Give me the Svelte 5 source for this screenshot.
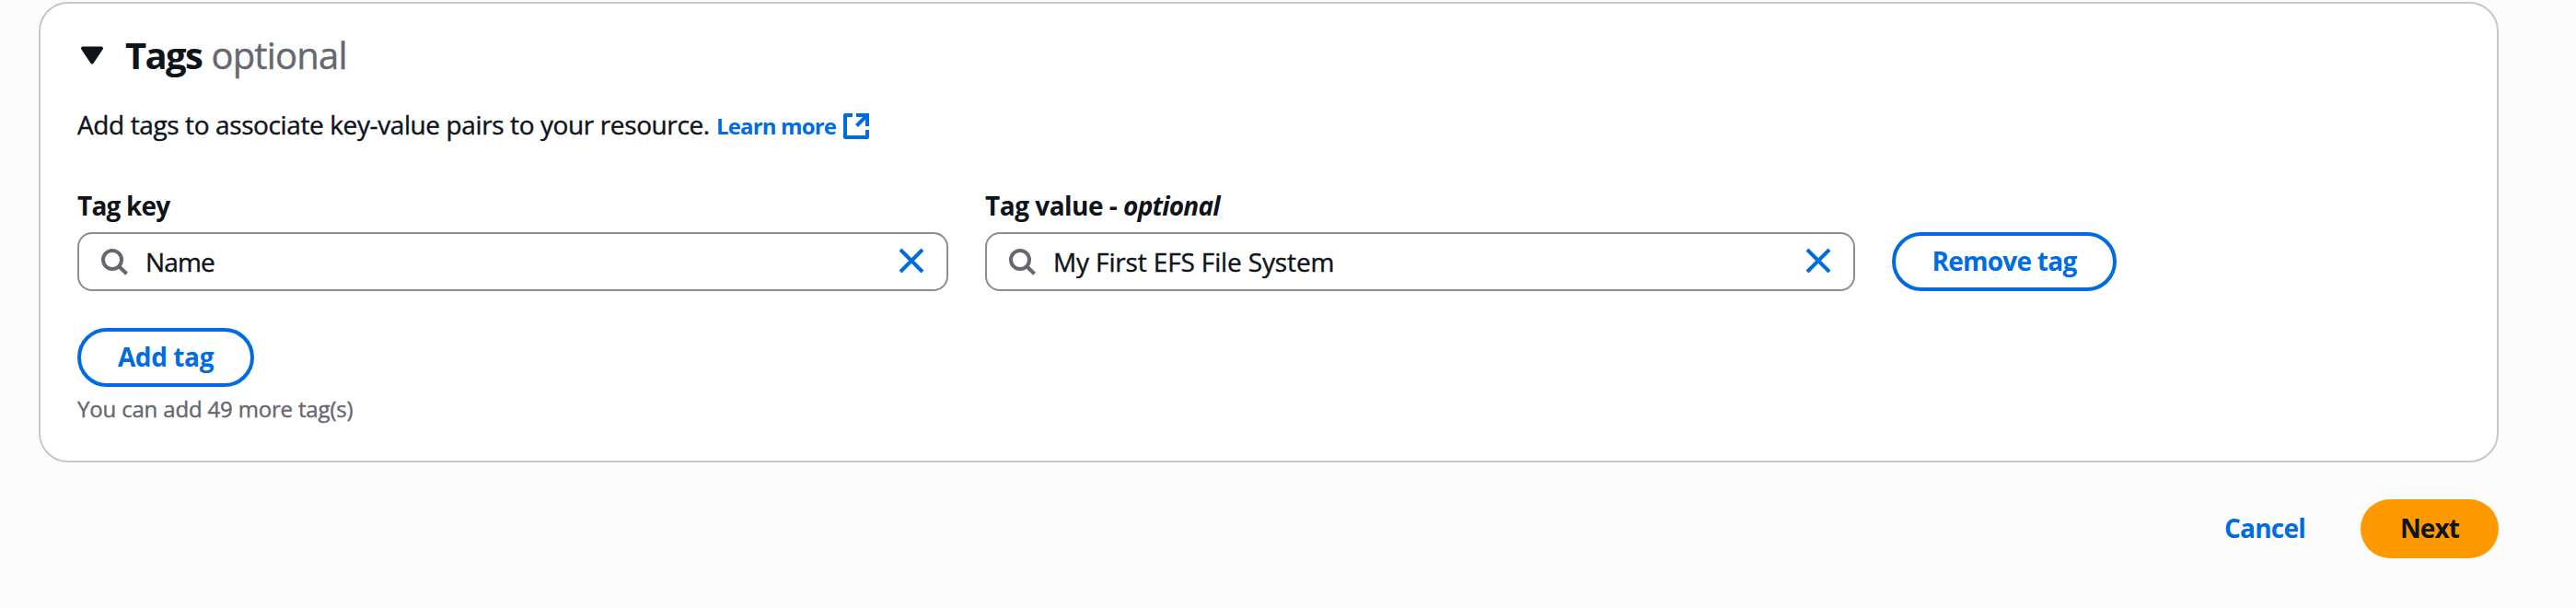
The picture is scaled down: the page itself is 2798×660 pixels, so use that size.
<script>
  const fields = [
    { id: 'key', label: 'Tag key', hint: '', value: 'Name' },
    { id: 'value', label: 'Tag value - ', hint: 'optional', value: 'My First EFS File System' }
  ];
</script>

<main>
  <section class="card">
    <header>
      <svg class="caret" viewBox="0 0 32 32" aria-hidden="true">
        <path d="M6 8.500h20L16 23.500z" fill="currentColor" stroke="currentColor" stroke-width="4" stroke-linejoin="round" />
      </svg>
      <h2>Tags</h2>
      <span class="muted">optional</span>
    </header>

    <p class="description">
      <span class="sentence">Add tags to associate key-value pairs to your resource.</span>
      <a href="#learn">Learn more</a>
      <svg class="external" viewBox="0 0 28 28" aria-hidden="true">
        <path d="M10 2H2v24h24v-8" stroke-linejoin="round" />
        <path d="M14 2h12v12M25 3 14.500 13.500" />
      </svg>
    </p>

    <div class="row">
      {#each fields as field}
        <div class="field {field.id}">
          <div class="label"><span>{field.label}</span>{#if field.hint}<i>{field.hint}</i>{/if}</div>
          <div class="input">
            <svg class="search" viewBox="0 0 32 32" aria-hidden="true">
              <circle cx="14" cy="14" r="10" />
              <path d="m21 21 8.600 8.200" />
            </svg>
            <span class="text">{field.value}</span>
            <svg class="clear" viewBox="0 0 28 28" aria-hidden="true">
              <path d="m2 2 24 24M26 2 2 26" />
            </svg>
          </div>
        </div>
      {/each}
      <button class="outline remove">Remove tag</button>
    </div>

    <button class="outline add">Add tag</button>
    <p class="help">You can add 49 more tag(s)</p>
  </section>

  <footer>
    <button class="cancel">Cancel</button>
    <button class="next">Next</button>
  </footer>
</main>

<style>
  :global(body) { background: #fcfcfd; }
  main {
    box-sizing: border-box;
    width: 2798px;
    height: 660px;
    padding: 2px 84px 0 42px;
    overflow: hidden;
    background: #fcfcfd;
    color: #0f141a;
    font: 400 28px/40px 'Open Sans', 'Noto Sans', sans-serif;
  }
  .card {
    box-sizing: border-box;
    height: 500px;
    padding: 32px 40px 0;
    border: 2px solid #c6c6cd;
    border-radius: 32px;
    background: #fff;
  }
  svg { flex: none; fill: none; }
  header { display: flex; align-items: center; height: 48px; font-size: 40px; line-height: 48px; }
  .caret { width: 32px; height: 32px; }
  h2 { margin: 0 10px 0 20px; font-size: 40px; font-weight: 700; letter-spacing: -1.6px; }
  .muted { color: #656871; letter-spacing: -.8px; }
  .muted, .sentence, .text, .help { -webkit-text-stroke: .4px currentColor; }
  .description { display: flex; align-items: center; height: 40px; margin: 31px 0 0; }
  .sentence { width: 689px; white-space: nowrap; letter-spacing: -.39px; }
  a { width: 129px; margin: 3px 9px 0 5px; color: #006ce0; font-size: 24px; font-weight: 700; letter-spacing: -.85px; text-decoration: none; white-space: nowrap; }
  .external { width: 28px; height: 28px; margin-top: 4px; stroke: #006ce0; stroke-width: 4; }
  .row { display: flex; align-items: flex-end; gap: 40px; margin-top: 48px; }
  .field { width: 946px; }
  .field.value { width: 945px; }
  .label { height: 40px; margin-bottom: 9px; font-weight: 700; white-space: pre; letter-spacing: -.8px; }
  .value .label { letter-spacing: -.5px; }
  .label i { letter-spacing: -.8px; }
  .input {
    display: flex;
    align-items: center;
    box-sizing: border-box;
    height: 64px;
    padding: 0 24px 0 22px;
    border: 2px solid #8c8c94;
    border-radius: 16px;
  }
  .search { width: 32px; height: 32px; stroke: #656871; stroke-width: 4; }
  .text { flex: 1; margin-left: 18px; letter-spacing: -.14px; }
  .key .text { letter-spacing: -.85px; }
  .clear { width: 28px; height: 28px; margin-top: -2px; stroke: #006ce0; stroke-width: 4; }
  button {
    display: block;
    box-sizing: border-box;
    height: 64px;
    margin: 0;
    padding: 0 0 2px;
    border: 0;
    border-radius: 32px;
    background: transparent;
    color: #006ce0;
    font: 700 28px/40px 'Open Sans', 'Noto Sans', sans-serif;
  }
  .outline { border: 4px solid #006ce0; }
  .remove { width: 244px; letter-spacing: -.75px; }
  .add { width: 192px; margin-top: 40px; letter-spacing: -.4px; }
  .help { margin: 8px 0 0; color: #656871; font-size: 24px; line-height: 32px; letter-spacing: -.17px; }
  footer { display: flex; justify-content: flex-end; gap: 16px; margin-top: 40px; }
  .cancel { width: 178px; padding-left: 2px; letter-spacing: -.8px; }
  .next { width: 150px; background: #ff9900; color: #0f141a; letter-spacing: -.9px; }
</style>
